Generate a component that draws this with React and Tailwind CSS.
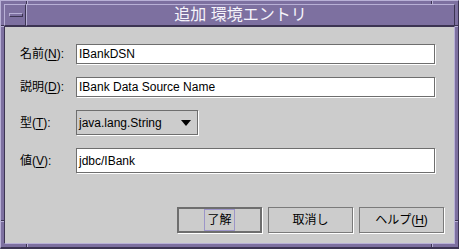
const font = "font-['Liberation_Sans','Noto_Sans_CJK_JP',sans-serif]";

function Label({ text, k }) {
  return (
    <div className="w-[56px] shrink-0 text-[12px] leading-none text-black">
      {text}(<span className="underline underline-offset-2">{k}</span>):
    </div>
  );
}

function Field({ value, tall }) {
  return (
    <div
      className={`flex w-[359px] items-center border border-[#6e6e6e] bg-white pl-[2px] text-[12px] text-black shadow-[1px_1px_0_#ffffff] ${
        tall ? "h-[25px]" : "h-[20px]"
      }`}
    >
      {value}
    </div>
  );
}

function Button({ children, isDefault }) {
  return (
    <button
      type="button"
      className={`flex h-[26px] w-[85px] items-center justify-center bg-[#cccccc] text-[12px] text-black shadow-[1px_1px_0_#ffffff] ${
        isDefault
          ? "border-2 border-[#6e6e6e]"
          : "border border-[#7a7a7a] shadow-[1px_1px_0_#ffffff,inset_1px_1px_0_#ffffff]"
      }`}
    >
      {children}
    </button>
  );
}

export default function App() {
  return (
    <div
      className={`relative flex h-[249px] w-[459px] flex-col border-t border-l border-r border-b-2 border-t-[#b8b0d6] border-l-[#b8b0d6] border-r-[#3c3452] border-b-[#3c3452] bg-[#7d70a0] p-[3px] ${font}`}
    >
      {/* resize-corner notches */}
      <div className="absolute left-[25px] top-0 h-[3px] w-[2px] border-l border-r border-l-[#3c3452] border-r-[#b8b0d6]" />
      <div className="absolute right-[25px] top-0 h-[3px] w-[2px] border-l border-r border-l-[#3c3452] border-r-[#b8b0d6]" />
      <div className="absolute bottom-0 left-[25px] h-[3px] w-[2px] border-l border-r border-l-[#3c3452] border-r-[#b8b0d6]" />
      <div className="absolute bottom-0 right-[25px] h-[3px] w-[2px] border-l border-r border-l-[#3c3452] border-r-[#b8b0d6]" />
      <div className="absolute left-0 top-[24px] h-[2px] w-[3px] border-t border-b border-t-[#3c3452] border-b-[#b8b0d6]" />
      <div className="absolute right-0 top-[24px] h-[2px] w-[3px] border-t border-b border-t-[#3c3452] border-b-[#b8b0d6]" />
      <div className="absolute left-0 bottom-[25px] h-[2px] w-[3px] border-t border-b border-t-[#3c3452] border-b-[#b8b0d6]" />
      <div className="absolute right-0 bottom-[25px] h-[2px] w-[3px] border-t border-b border-t-[#3c3452] border-b-[#b8b0d6]" />

      {/* title bar */}
      <div className="flex h-[22px] shrink-0">
        <div className="flex w-[22px] items-center border-t border-l border-b border-r border-t-[#b8b0d6] border-l-[#b8b0d6] border-b-[#3c3452] border-r-[#3c3452] pl-[4px]">
          <div className="h-[4px] w-[14px] border-t border-l border-b border-r border-t-[#b8b0d6] border-l-[#b8b0d6] border-b-[#3c3452] border-r-[#3c3452]" />
        </div>
        <div className="flex flex-1 items-center justify-center border-t border-l border-b border-r border-t-[#b8b0d6] border-l-[#b8b0d6] border-b-[#3c3452] border-r-[#3c3452] text-[16px] leading-none text-[#f6f4fb]">
          追加 環境エントリ
        </div>
      </div>

      {/* body */}
      <div className="flex flex-1 flex-col border-t border-l border-b border-r border-t-[#3c3452] border-l-[#3c3452] border-b-[#b8b0d6] border-r-[#b8b0d6] bg-[#cccccc] pl-[15px] pt-[17px]">
        <div className="flex items-center">
          <Label text="名前" k="N" />
          <Field value="IBankDSN" />
        </div>
        <div className="mt-[13px] flex items-center">
          <Label text="説明" k="D" />
          <Field value="IBank Data Source Name" />
        </div>
        <div className="mt-[13px] flex items-center">
          <Label text="型" k="T" />
          <div className="flex h-[25px] w-[122px] items-center justify-between border border-[#6e6e6e] bg-[#cccccc] pl-[2px] pr-[6px] text-[12px] text-black shadow-[1px_1px_0_#ffffff]">
            <span>java.lang.String</span>
            <svg width="10" height="6" viewBox="0 0 10 6">
              <path d="M0 0H10L5 6Z" fill="#000" />
            </svg>
          </div>
        </div>
        <div className="mt-[13px] flex items-center">
          <Label text="値" k="V" />
          <Field value="jdbc/IBank" tall />
        </div>

        <div className="mt-[34px] flex justify-end gap-[6px] pr-[10px]">
          <Button isDefault>
            <span className="border border-[#9c95c9] px-[2px] py-[1px]">了解</span>
          </Button>
          <Button>取消し</Button>
          <Button>
            ヘルプ(<span className="underline underline-offset-2">H</span>)
          </Button>
        </div>
      </div>
    </div>
  );
}
